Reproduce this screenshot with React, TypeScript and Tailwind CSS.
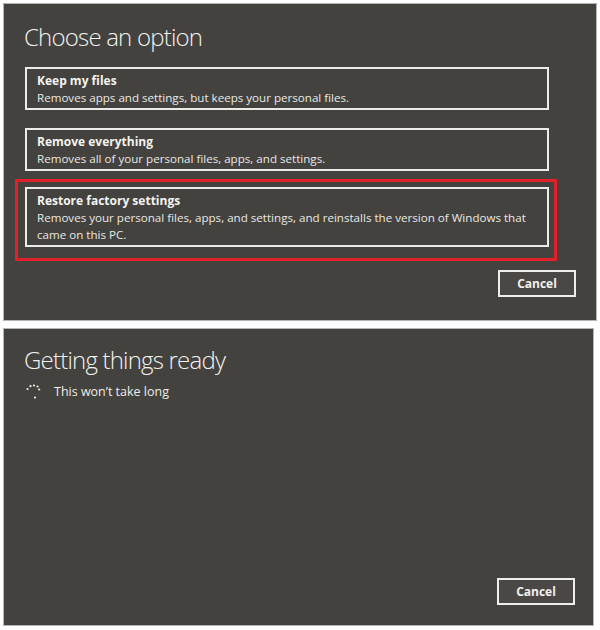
import React from "react";

function OptionBox({ title, lines }: { title: string; lines: string[] }) {
  return (
    <div className="w-[524px] border-2 border-[#ecebe8] px-[10px] pt-[3px] pb-[2px] text-[#e9e8e5]">
      <div className="text-[12px] leading-[17px] font-bold text-[#f4f3f0]">{title}</div>
      {lines.map((l) => (
        <div key={l} className="text-[11.6px] leading-[17px]">
          {l}
        </div>
      ))}
    </div>
  );
}

function CancelButton() {
  return (
    <div className="w-[78px] h-[27px] border-2 border-[#efeeeb] bg-[#4a4744] flex items-center justify-center text-[12px] font-bold text-[#f2f1ee]">
      Cancel
    </div>
  );
}

function Spinner() {
  const dots: [number, number][] = [
    [2.5, 5],
    [5.5, 2.2],
    [9, 1.5],
    [12.5, 2.5],
    [14.2, 5.5],
    [10, 13.5],
  ];
  return (
    <svg width="17" height="16" viewBox="0 0 17 16" className="shrink-0">
      {dots.map(([x, y], i) => (
        <circle key={i} cx={x} cy={y} r="1.1" fill="#f0efec" />
      ))}
    </svg>
  );
}

export default function App() {
  return (
    <div className="w-[600px] h-[630px] bg-white overflow-hidden font-['Open_Sans',sans-serif] pt-[3px]">
      <div className="ml-[3px] w-[594px] h-[318px] bg-[#43423e] border border-[#b4b4b2] flex flex-col pl-[21px] pr-[20px]">
        <h1 className="mt-[18px] text-[24px] leading-[30px] font-light text-[#f2f1ee] -ml-[1px] tracking-[-0.8px]">
          Choose an option
        </h1>
        <div className="mt-[15px] flex flex-col">
          <OptionBox
            title="Keep my files"
            lines={["Removes apps and settings, but keeps your personal files."]}
          />
          <div className="mt-[18px]">
            <OptionBox
              title="Remove everything"
              lines={["Removes all of your personal files, apps, and settings."]}
            />
          </div>
          <div className="mt-[16px] relative w-[524px]">
            <OptionBox
              title="Restore factory settings"
              lines={[
                "Removes your personal files, apps, and settings, and reinstalls the version of Windows that",
                "came on this PC.",
              ]}
            />
            <div className="absolute -top-[8px] -left-[10px] -right-[8px] -bottom-[14px] border-[3px] border-[#e3202a] pointer-events-none" />
          </div>
        </div>
        <div className="mt-[23px] flex justify-end">
          <CancelButton />
        </div>
      </div>

      <div className="ml-[3px] mt-[7px] w-[591px] h-[298px] bg-[#43423e] border border-[#b4b4b2] flex flex-col pl-[21px] pr-[18px] pb-[20px]">
        <h1 className="mt-[16px] text-[24px] leading-[30px] font-light text-[#f2f1ee] -ml-[1px] tracking-[-0.8px]">
          Getting things ready
        </h1>
        <div className="mt-[8px] flex items-center gap-[12px] h-[18px]">
          <Spinner />
          <span className="text-[12.5px] text-[#eeede9]">This won’t take long</span>
        </div>
        <div className="mt-auto flex justify-end">
          <CancelButton />
        </div>
      </div>
    </div>
  );
}
